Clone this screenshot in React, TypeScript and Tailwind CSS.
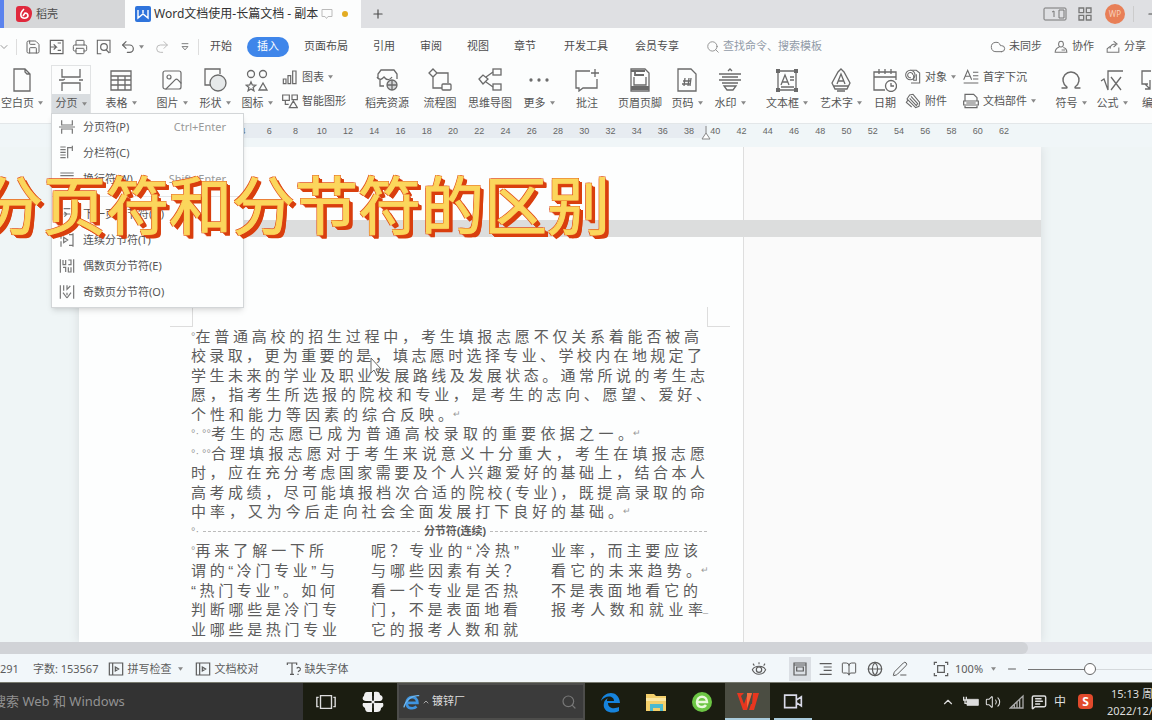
import type { ReactNode } from 'react'
import {
  BookOpen,
  ChevronDown,
  ChevronUp,
  Cloud,
  Globe,
  Image,
  MessageSquareText,
  Minus,
  Omega,
  PenLine,
  Plus,
  Printer,
  Redo2,
  Save,
  Search,
  Undo2,
  Volume2,
} from 'lucide-react'

type IconProps = { children: ReactNode; className?: string }

function Icon({ children, className = 'size-6' }: IconProps) {
  return (
    <svg
      viewBox="0 0 24 24"
      fill="none"
      stroke="currentColor"
      strokeWidth="1.3"
      className={`shrink-0 ${className}`}
      aria-hidden="true"
    >
      {children}
    </svg>
  )
}

function Caret() {
  return (
    <svg viewBox="0 0 6 4" className="h-1 w-[5px] shrink-0 fill-[#888]" aria-hidden="true">
      <path d="M0 0h6L3 4z" />
    </svg>
  )
}

const icons: Record<string, ReactNode> = {
  blank: <path d="M4 1h11l5 5v17H4zM15 1v3l2 2h3" />,
  break: <path d="M3 1v8h18V1M0 12h4l2-1M3 23v-8h18v8M20 12h4" />,
  table: (
    <>
      <path d="M2 3h20v19H2z" />
      <path d="M2 8h20M2 12h20M2 17h20M9 8v14M16 8v14" />
    </>
  ),
  shapes: (
    <>
      <path d="M8 17H2V1h15v5" />
      <circle cx="15" cy="15" r="8" fill="#e6e9ea" />
    </>
  ),
  iconset: (
    <>
      <circle cx="6" cy="6" r="3.500" />
      <circle cx="18" cy="6" r="3.500" />
      <path d="M6 14l1.300 3 3.400.3-2.600 2.200.8 3.300L6 21l-2.900 1.800.8-3.300-2.600-2.200 3.400-.3zM18 15l4 7h-8z" />
    </>
  ),
  chart: <path d="M2 15h4v7H2zM9 10h4v12H9zM16 3h5v19h-5z" strokeWidth="1.8" />,
  smart: <path d="M1 3h10v8H1zM5 11v6h5M11 22l6-10 6 10zM15 3h8v7h-8z" strokeWidth="1.8" />,
  store: (
    <>
      <path d="M9 18H5v-6M3 11V6l3-4h13l3 4v5M2 9c3 4 5 2 7 0 3 4 6 3 8 0" />
      <circle cx="17" cy="17" r="5" fill="#d5d7d8" />
      <path d="M12 17h10M17 12v10" />
    </>
  ),
  flow: (
    <>
      <path d="M5 1l4 4-4 4-4-4zM9 5h11v10M5 9v11h9" />
      <rect x="14" y="16" width="9" height="6" rx="1" />
    </>
  ),
  mind: (
    <>
      <path d="M1 11l4-4 5 4-5 5zM8 9l7-5M8 14l7 5" />
      <rect x="15" y="1" width="8" height="6" />
      <rect x="15" y="16" width="8" height="6" />
    </>
  ),
  more: (
    <>
      <circle cx="4" cy="12" r="1" fill="currentColor" />
      <circle cx="12" cy="12" r="1" fill="currentColor" />
      <circle cx="20" cy="12" r="1" fill="currentColor" />
    </>
  ),
  comment: <path d="M15 3H1v17h3v3l4-3h14v-9M20 1v8M16 5h8" />,
  header: (
    <>
      <path d="M3 1h14l4 4v18H3z" />
      <path d="M3 3h14M3 19h18M3 21h18M7 3v4h9" strokeWidth="1.8" />
      <path d="M6 9v8h12V9" />
    </>
  ),
  pageNo: (
    <>
      <path d="M3 1h13l5 5v17H3z" />
      <path d="M10 10l-1 8M14 10l-1 8M8 13h8M7 16h8M16 10l-1 8" />
    </>
  ),
  watermark: <path d="M1 6h22M1 12h22M4 9h16M4 15h16M6 18h12l-3 4H9zM10 3l2-2 2 2" />,
  textBox: (
    <>
      <path d="M3 3h18v19H3z" />
      <path d="M6 17l4-10 4 10M7 14h6M15 9h4M15 12h4M6 19h13" />
      <g fill="currentColor" stroke="none">
        <path d="M1 1h4v4H1zM19 1h4v4h-4zM1 20h4v4H1zM19 20h4v4h-4z" />
      </g>
    </>
  ),
  wordArt: (
    <path d="M12 1l3 3 6 11-3 6H6l-3-6L9 4zM8 16l4-10 4 10M9 13h6M4 18h16M8 23h8" />
  ),
  date: (
    <>
      <path d="M12 22H1V4h22v8M1 9h22M6 1v5M12 1v5M18 1v5" />
      <circle cx="18" cy="18" r="5.500" fill="#fff" />
      <path d="M18 15v3h3" />
    </>
  ),
  object: (
    <>
      <path d="M9 21h13V6l-5-4H8" strokeWidth="1.600" />
      <circle cx="8" cy="9" r="7" fill="#fff" strokeWidth="1.600" />
      <path d="M12 9a4 4 0 1 0-3 4M13 9v8h4V8" strokeWidth="1.600" />
    </>
  ),
  attach: <path d="M3 9l4-6 5-1 10 12-1 6-5 2L3 9zM7 8l10 11 2-3L9 5M4 11l-2 3 8 7" strokeWidth="1.600" />,
  dropCap: <path d="M1 16L7 2l6 14M3 11h8M15 5h8M15 10h8M15 15h8M1 21h22" strokeWidth="1.600" />,
  parts: (
    <>
      <path d="M3 12V2h13l5 5v5M3 19v3h18v-3" strokeWidth="1.800" />
      <path d="M1 12h22v6H1zM5 15h14" strokeWidth="1.800" />
    </>
  ),
  formula: <path d="M1 13l3-2 4 11V3h15M11 9l10 13M21 9L11 22" />,
  numbering: <path d="M10 3H1v13h6M14 8h10M4 16l5 5M9 12v9H4M14 4h10v16H14z" />,
}

type Tool = { label: string; icon: string; box: string; caret?: boolean }

const toolsLeft: Tool[] = [
  { label: '表格', icon: 'table', box: 'ml-2 w-11', caret: true },
  { label: '图片', icon: 'image', box: 'ml-[7px] w-11', caret: true },
  { label: '形状', icon: 'shapes', box: 'w-[42px]', caret: true },
  { label: '图标', icon: 'iconset', box: 'w-[42px]', caret: true },
]

const toolsMiddle: Tool[] = [
  { label: '稻壳资源', icon: 'store', box: 'ml-3 w-[52px]' },
  { label: '流程图', icon: 'flow', box: 'ml-0.5 w-[50px]' },
  { label: '思维导图', icon: 'mind', box: 'w-[50px]' },
  { label: '更多', icon: 'more', box: 'ml-0.5 w-11', caret: true },
  { label: '批注', icon: 'comment', box: 'ml-1 w-11' },
  { label: '页眉页脚', icon: 'header', box: 'ml-1.5 w-[50px]' },
  { label: '页码', icon: 'pageNo', box: 'w-11', caret: true },
  { label: '水印', icon: 'watermark', box: 'w-[42px]', caret: true },
  { label: '文本框', icon: 'textBox', box: 'ml-2.5 w-[52px]', caret: true },
  { label: '艺术字', icon: 'wordArt', box: 'ml-0.5 w-[52px]', caret: true },
  { label: '日期', icon: 'date', box: 'w-9' },
]

const toolsRight: Tool[] = [
  { label: '符号', icon: 'omega', box: 'ml-3 w-10', caret: true },
  { label: '公式', icon: 'formula', box: 'w-[42px]', caret: true },
  { label: '编号', icon: 'numbering', box: 'w-10' },
]

function ToolIcon({ name }: { name: string }) {
  if (name === 'image') {
    return <Image className="size-6 text-[#6a6a6a]" strokeWidth={1.2} />
  }
  if (name === 'omega') {
    return <Omega className="size-6 text-[#6a6a6a]" strokeWidth={1.4} />
  }
  return <Icon className="size-6 text-[#6a6a6a]">{icons[name]}</Icon>
}

function ToolButton({ label, icon, box, caret }: Tool) {
  return (
    <button className={`flex shrink-0 flex-col items-center gap-[3px] pt-[3px] ${box}`}>
      <ToolIcon name={icon} />
      <span className="flex items-center gap-1 whitespace-nowrap leading-4">
        {label}
        {caret && <Caret />}
      </span>
    </button>
  )
}

function SmallTool({ label, icon, caret }: { label: string; icon: string; caret?: boolean }) {
  return (
    <button className="flex h-6 items-center gap-1 whitespace-nowrap">
      <Icon className="size-4 text-[#6a6a6a]">{icons[icon]}</Icon>
      {label}
      {caret && <Caret />}
    </button>
  )
}

function TitleBar() {
  return (
    <div className="flex h-7 shrink-0 items-stretch overflow-hidden bg-[#dfe0e3]">
      <div className="w-1 shrink-0 bg-[#5b83ee]" />
      <button className="flex w-[121px] shrink-0 items-center gap-1 bg-[#d6d7d9] pl-3">
        <svg viewBox="0 0 16 16" className="size-4" aria-hidden="true">
          <path d="M3 0h6c4 0 7 3 7 7 0 5-3 9-7 9H3c-2 0-3-1-3-3V3c0-2 1-3 3-3z" fill="#e0293d" />
          <path d="M8 3c-2 2-4 4-3 7 1 3 6 3 7 0 0-2-1-3-3-3l-2 3" fill="none" stroke="#fff" strokeWidth="1.600" />
        </svg>
        稻壳
      </button>
      <div className="flex w-[236px] shrink-0 items-center gap-[3px] bg-[#fcfdfd] pl-2.5">
        <svg viewBox="0 0 16 16" className="size-4 shrink-0" aria-hidden="true">
          <rect width="16" height="16" rx="2" fill="#2f74dc" />
          <path d="M3 4v8l5-4 5 4V4M8 4v3" fill="none" stroke="#fff" strokeWidth="1.400" />
        </svg>
        <span className="whitespace-nowrap text-[12px] text-[#333]">Word文档使用-长篇文档 - 副本</span>
        <Icon className="size-3 text-[#bbb]">
          <path d="M2 3h20v14h-8l-3 4-3-4H2z" strokeWidth="2" />
        </Icon>
        <span className="ml-1.5 size-1.5 rounded-full bg-[#e3ac23]" />
      </div>
      <button className="ml-2.5 flex items-center" aria-label="新建">
        <Plus className="size-3.5" strokeWidth={2} />
      </button>
      <div className="ml-auto flex shrink-0 items-center">
        <svg viewBox="0 0 24 14" className="h-3.5 w-6" fill="none" stroke="#777" aria-hidden="true">
          <rect x="1" y="1" width="22" height="12" rx="1" />
          <path d="M9 5l2-1v6M16 3v8h5V3z" />
        </svg>
        <Icon className="ml-2.5 size-4 text-[#777]">
          <path d="M3 3h7v7H3zM14 3h7v7h-7zM3 14h7v7H3zM14 14h7v7h-7z" strokeWidth="2" />
        </Icon>
        <span className="ml-3 flex size-5 items-center justify-center rounded-full bg-[#e87f57] text-[8px] text-[#f7cdb8]">
          WP
        </span>
        <span className="ml-2 h-4 w-px bg-[#ccc]" />
        <button className="ml-3 w-1.5 overflow-hidden" aria-label="最小化">
          <Minus className="size-3.5" />
        </button>
      </div>
    </div>
  )
}

function MenuBar() {
  return (
    <div className="flex h-[37px] shrink-0 items-center overflow-hidden whitespace-nowrap">
      <div className="flex w-[210px] shrink-0 items-center text-[#666]">
        <ChevronDown className="-ml-0.5 size-3 text-[#999]" />
        <span className="ml-1.5 h-4 w-px bg-[#ddd]" />
        <Save className="ml-2 size-4" strokeWidth={1.5} />
        <Icon className="ml-2 size-4">
          <path d="M2 2h19v20H2zM2 12h9l-4-4M7 16l4-4M13 6h5M13 17h5" strokeWidth="1.800" />
        </Icon>
        <Printer className="ml-[7px] size-4" strokeWidth={1.5} />
        <Icon className="ml-2 size-4">
          <path d="M8 22H2V2h19v19" strokeWidth="1.600" />
          <circle cx="12" cy="12" r="5" strokeWidth="1.800" />
          <path d="M15 16l5 5" strokeWidth="1.800" />
        </Icon>
        <Undo2 className="ml-2 size-4" strokeWidth={1.8} />
        <span className="ml-[3px]">
          <Caret />
        </span>
        <Redo2 className="ml-2.5 size-4 text-[#bbb]" strokeWidth={1.5} />
        <Icon className="ml-2.5 size-2.5">
          <path d="M4 4h16M5 11h14l-7 8z" strokeWidth="2" />
        </Icon>
        <span className="ml-2 h-4 w-px bg-[#ddd]" />
      </div>
      <nav className="flex items-center gap-[25px]">
        <button>开始</button>
        <button className="-mx-2.5 h-5 w-[42px] rounded-full bg-[#3f86ea] text-white">插入</button>
        <button>页面布局</button>
        <button>引用</button>
        <button>审阅</button>
        <button>视图</button>
        <button>章节</button>
        <button className="ml-[3px]">开发工具</button>
        <button className="ml-0.5">会员专享</button>
      </nav>
      <label className="ml-[27px] flex items-center gap-[3px] text-[#888]">
        <Search className="size-3.5" strokeWidth={1.5} />
        <input
          className="w-32 bg-transparent outline-none placeholder:text-[#929ba8]"
          placeholder="查找命令、搜索模板"
          aria-label="查找命令"
        />
      </label>
      <div className="ml-auto flex shrink-0 items-center gap-3 pr-1.5 text-[#555]">
        <button className="flex items-center gap-[3px]">
          <Cloud className="size-4 text-[#777]" strokeWidth={1.5} />
          未同步
        </button>
        <button className="flex items-center gap-1">
          <Icon className="size-3.5 text-[#777]">
            <path d="M12 12c-6 0-5-10 0-10s6 10 0 10zM9 12c-5 2-7 4-7 9h20c0-5-2-7-6-8M13 17h6" strokeWidth="1.800" />
          </Icon>
          协作
        </button>
        <button className="flex items-center gap-1">
          <Icon className="size-3.5 text-[#777]">
            <path d="M7 11l-5 4v6h20v-8M7 15c0-6 4-8 10-8M13 2l6 5-6 5" strokeWidth="1.800" />
          </Icon>
          分享
        </button>
      </div>
    </div>
  )
}

type BreakItem = { label: string; keys?: string; path: string }

const breakItems: BreakItem[] = [
  { label: '分页符(P)', keys: 'Ctrl+Enter', path: 'M4 2v7h16V2M0 12h24M4 22v-7h16v7' },
  { label: '分栏符(C)', path: 'M2 3h8M2 7h8M2 11h8M2 15h8M2 19h8M13 3v17M13 4h6M20 1v8' },
  { label: '换行符(W)', keys: 'Shift+Enter', path: 'M2 3h20M2 7h20M2 12h12M20 11v6H8M12 13l-4 4 4 4' },
  { label: '下一页分节符(N)', path: 'M3 2v20M21 2v20M7 4h10M7 12h10M8 9l4 3-4 4' },
  { label: '连续分节符(T)', path: 'M3 2v8M3 14v8M21 2v20M7 8l6 4-6 4zM15 4h6M15 20h6' },
  { label: '偶数页分节符(E)', path: 'M2 2v20M22 2v20M6 3v7h4V3M14 3h4v7h-4M6 14h4v7M14 14v7h4v-7' },
  { label: '奇数页分节符(O)', path: 'M2 2v20M22 2v20M7 2v8M12 2v6l5-5M6 13l6 8M18 13l-6 8M12 13v4' },
]

function BreakMenu() {
  return (
    <div
      role="menu"
      className="absolute top-full -left-px z-10 flex w-[193px] flex-col border border-[#d3d6d8] bg-[#fdfefe] pb-0.5 shadow-md"
    >
      {breakItems.map((item, i) => (
        <button
          key={item.label}
          role="menuitem"
          className={`flex h-[26px] items-center whitespace-nowrap pr-[17px] pl-[7px] text-[#555] ${
            i === 3 ? 'mt-1 box-content border-t border-[#e4e6e8] pt-1' : ''
          }`}
        >
          <Icon className="mr-2 size-4 text-[#777]">
            <path d={item.path} strokeWidth="1.800" />
          </Icon>
          {item.label}
          {item.keys && <span className="ml-auto text-[#999]">{item.keys}</span>}
        </button>
      ))}
    </div>
  )
}

function Ribbon() {
  return (
    <div className="flex h-[59px] shrink-0 items-start border-b border-[#e3e7e9] text-[#555]">
      <ToolButton label="空白页" icon="blank" box="w-11" caret />
      <div className="relative ml-[7px] w-10 shrink-0 border border-[#e1e3e4]">
        <button className="flex w-full flex-col items-center gap-0.5 pt-0.5">
          <ToolIcon name="break" />
          <span className="flex h-[19px] w-full items-center justify-center gap-1 bg-[#d9dde0]">
            分页
            <Caret />
          </span>
        </button>
        <BreakMenu />
      </div>
      {toolsLeft.map((tool) => (
        <ToolButton key={tool.label} {...tool} />
      ))}
      <div className="ml-1 w-[67px] shrink-0">
        <SmallTool label="图表" icon="chart" caret />
        <SmallTool label="智能图形" icon="smart" />
      </div>
      {toolsMiddle.map((tool) => (
        <ToolButton key={tool.label} {...tool} />
      ))}
      <div className="ml-0.5 w-[54px] shrink-0">
        <SmallTool label="对象" icon="object" caret />
        <SmallTool label="附件" icon="attach" />
      </div>
      <div className="ml-1 w-[76px] shrink-0">
        <SmallTool label="首字下沉" icon="dropCap" />
        <SmallTool label="文档部件" icon="parts" caret />
      </div>
      {toolsRight.map((tool) => (
        <ToolButton key={tool.label} {...tool} />
      ))}
    </div>
  )
}

const rulerMarks = Array.from({ length: 30 }, (_, i) => 4 + i * 2)

function Ruler() {
  return (
    <div className="flex h-[23px] shrink-0 items-start bg-[#f0f6f8] font-['Liberation_Sans',sans-serif] text-[9px] text-[#666]">
      <div className="relative ml-[192px] flex h-3.5 w-[515px] shrink-0 bg-[#e7ecf1] pl-[38px]">
        <div className="flex w-[787px] shrink-0">
          {rulerMarks.map((n) => (
            <span key={n} className="flex-1 text-center leading-[14px]">
              {n}
            </span>
          ))}
        </div>
        <svg viewBox="0 0 10 14" className="absolute top-0.5 -right-1 h-3.5 w-2.5" aria-hidden="true">
          <path d="M5 0v7M5 7l4 6H1z" fill="#fff" stroke="#888" />
        </svg>
      </div>
    </div>
  )
}

type Line = { text: string; width: string; marks?: string; end?: string }

const body: Line[] = [
  { text: '在普通高校的招生过程中，考生填报志愿不仅关系着能否被高', width: 'w-[508px]', marks: '°' },
  { text: '校录取，更为重要的是，填志愿时选择专业、学校内在地规定了', width: 'w-[511px]' },
  { text: '学生未来的学业及职业发展路线及发展状态。通常所说的考生志', width: 'w-[514px]' },
  { text: '愿，指考生所选报的院校和专业，是考生的志向、愿望、爱好、', width: 'w-[520px]' },
  { text: '个性和能力等因素的综合反映。', width: 'w-[270px]', end: '↵' },
  { text: '考生的志愿已成为普通高校录取的重要依据之一。', width: 'w-[450px]', marks: '°· °°', end: '↵' },
  { text: '合理填报志愿对于考生来说意义十分重大，考生在填报志愿', width: 'w-[514px]', marks: '°· °°' },
  { text: '时，应在充分考虑国家需要及个人兴趣爱好的基础上，结合本人', width: 'w-[514px]' },
  { text: '高考成绩，尽可能填报档次合适的院校(专业)，既提高录取的命', width: 'w-[514px]' },
  { text: '中率，又为今后走向社会全面发展打下良好的基础。', width: 'w-[440px]', end: '↵' },
]

const columns: Line[][] = [
  [
    { text: '再来了解一下所', width: 'w-[133px]', marks: '°' },
    { text: '谓的“冷门专业”与', width: 'w-[144px]' },
    { text: '“热门专业”。如何', width: 'w-[144px]' },
    { text: '判断哪些是冷门专', width: 'w-[146px]' },
    { text: '业哪些是热门专业', width: 'w-[146px]' },
  ],
  [
    { text: '呢？专业的“冷热”', width: 'w-[148px]' },
    { text: '与哪些因素有关？', width: 'w-[148px]' },
    { text: '看一个专业是否热', width: 'w-[147px]' },
    { text: '门，不是表面地看', width: 'w-[147px]' },
    { text: '它的报考人数和就', width: 'w-[147px]' },
  ],
  [
    { text: '业率，而主要应该', width: 'w-[147px]' },
    { text: '看它的未来趋势。', width: 'w-[158px]', end: '↵' },
    { text: '不是表面地看它的', width: 'w-[147px]' },
    { text: '报考人数和就业率', width: 'w-[157px]', end: '_' },
    { text: '', width: 'w-[147px]' },
  ],
]

function TextLine({ text, width, marks, end }: Line) {
  return (
    <p className={`flex h-[19px] items-center whitespace-nowrap leading-[19px] ${width}`}>
      {marks && <span className="shrink-0 text-[11px] text-[#999]">{marks}</span>}
      <span className="block flex-1 [text-align-last:justify]">{text}</span>
      {end && <span className="shrink-0 text-[9px] text-[#999]">{end}</span>}
    </p>
  )
}

function Workspace() {
  return (
    <main className="relative flex min-h-0 flex-1 overflow-hidden bg-[#eff5f6] pl-[79px]">
      <div className="flex w-[962px] shrink-0 flex-col shadow-[0_0_10px_#d5dadd]">
        <div className="flex h-[73px] shrink-0">
          <div className="w-[665px] border-r border-[#dedede] bg-[#fdfefe]" />
          <div className="flex-1 bg-[#fafafa]" />
        </div>
        <div className="h-[17px] shrink-0 bg-[#dcdddd]" />
        <div className="flex flex-1">
          <article className="relative w-[665px] border-r border-[#dedede] bg-[#fdfefe] font-['Liberation_Sans','Noto_Sans_CJK_SC',sans-serif] text-[15px] text-[#5c5c5c]">
            <div className="mt-[70px] ml-[91px] flex w-[560px] justify-between">
              <span className="h-5 w-[23px] border-r border-b border-[#ddd]" />
              <span className="h-5 w-[23px] border-b border-l border-[#ddd]" />
            </div>
            <div className="ml-[112px] w-[522px]">
              <div className="flex h-[194px] flex-col justify-between">
                {body.map((line) => (
                  <TextLine key={line.text} {...line} />
                ))}
              </div>
              <div className="flex h-5 w-[516px] items-center gap-1 text-[11px]">
                <span className="text-[#999]">°·</span>
                <span className="flex-1 border-b border-dashed border-[#bbb]" />
                <span className="font-bold">分节符(连续)</span>
                <span className="flex-1 border-b border-dashed border-[#bbb]" />
              </div>
              <div className="flex">
                {columns.map((lines, i) => (
                  <div key={i} className="flex h-[98px] w-[180px] shrink-0 flex-col justify-between">
                    {lines.map((line) => (
                      <TextLine key={line.text} {...line} />
                    ))}
                  </div>
                ))}
              </div>
            </div>
            <svg viewBox="0 0 12 20" className="absolute top-[120px] left-[291px] h-5 w-3" aria-hidden="true">
              <path d="M1 1v15l3-3 3 6 2-1-3-6h5z" fill="#fff" stroke="#666" />
            </svg>
          </article>
          <div className="flex-1 bg-[#fafafa]" />
        </div>
      </div>
    </main>
  )
}

function StatusBar() {
  return (
    <div className="flex h-7 shrink-0 items-center overflow-hidden whitespace-nowrap bg-[#f2f7fa] pt-0.5 text-[#5c5c5c]">
      <span>291</span>
      <span className="ml-3.5">字数: 153567</span>
      <button className="ml-2.5 flex items-center gap-[3px]">
        <Icon className="size-4">
          <path d="M2 3h20v18H2zM7 3v18M11 9l5 3-5 3z" strokeWidth="1.800" />
        </Icon>
        拼写检查
        <span className="ml-1">
          <Caret />
        </span>
      </button>
      <button className="ml-3 flex items-center gap-[3px]">
        <Icon className="size-4">
          <path d="M2 3h20v18H2zM7 3v18M11 9l5 3-5 3z" strokeWidth="1.800" />
        </Icon>
        文档校对
      </button>
      <button className="ml-7 flex items-center gap-0.5">
        <Icon className="size-4">
          <path d="M2 6V3h14v3M9 3v17M6 20h6M16 11c3-3 7 0 5 3l-3 2M18 19v2" strokeWidth="1.800" />
        </Icon>
        缺失字体
      </button>
      <div className="ml-auto flex shrink-0 items-center">
        <Icon className="size-4">
          <path d="M2 13c4-7 16-7 20 0-4 9-16 9-20 0zM12 5V2M5 7L3 4M19 7l2-3" strokeWidth="1.600" />
          <circle cx="12" cy="13" r="4" strokeWidth="1.800" />
        </Icon>
        <button className="ml-[22px] flex h-6 w-[22px] items-center justify-center bg-[#dbdfe4]" aria-label="页面视图">
          <Icon className="size-4">
            <path d="M3 3h18v18H3zM7 9h10v6H7zM3 6h18" strokeWidth="1.800" />
          </Icon>
        </button>
        <Icon className="ml-1.5 size-4">
          <path d="M4 4h18M10 9h12M10 14h12M4 20h18" strokeWidth="1.800" />
        </Icon>
        <BookOpen className="ml-2 size-4" strokeWidth={1.5} />
        <Globe className="ml-2.5 size-4" strokeWidth={1.8} />
        <PenLine className="ml-[9px] size-4" strokeWidth={1.5} />
        <Icon className="ml-[25px] size-4">
          <path d="M7 7h10v10H7zM2 6V2h4M18 2h4v4M22 18v4h-4M6 22H2v-4" strokeWidth="1.800" />
        </Icon>
        <span className="ml-1.5 w-8">100%</span>
        <span className="ml-1">
          <Caret />
        </span>
        <button className="ml-2.5" aria-label="缩小">
          <Minus className="size-3" />
        </button>
        <input
          type="range"
          defaultValue={50}
          aria-label="显示比例"
          className="ml-2.5 h-px w-[124px] appearance-none bg-[linear-gradient(to_right,#777_50%,#d5d9dc_50%)] [&::-webkit-slider-thumb]:size-3 [&::-webkit-slider-thumb]:appearance-none [&::-webkit-slider-thumb]:rounded-full [&::-webkit-slider-thumb]:border [&::-webkit-slider-thumb]:border-[#666] [&::-webkit-slider-thumb]:bg-white"
        />
      </div>
    </div>
  )
}

function Taskbar() {
  return (
    <div className="flex h-[38px] shrink-0 items-stretch overflow-hidden border-t border-[#77796e] bg-[#1b1d11] text-[#ddd]">
      <input
        className="-ml-[7px] w-[310px] shrink-0 bg-[#333] text-[13px] outline-none placeholder:text-[#929292]"
        placeholder="搜索 Web 和 Windows"
        aria-label="搜索"
      />
      <button className="ml-3 flex items-center" aria-label="任务视图">
        <Icon className="size-[22px]">
          <path d="M6 5h12v14H6zM4 7H2v10h2M20 7h2v10h-2" strokeWidth="1.500" />
        </Icon>
      </button>
      <button className="ml-[25px] flex items-center" aria-label="浏览器">
        <svg viewBox="0 0 22 22" className="size-[22px]" aria-hidden="true">
          <g fill="#f0f0f0">
            <path d="M5 1h5v9H4c-4 0-4-4-2-5 0-2 1-4 3-4z" />
            <path d="M12 1c4-1 6 0 6 3 4 1 3 6 0 6h-6z" />
            <path d="M1 12h9v9H6c-2 0-3-2-3-4-2-1-3-3-2-5z" />
            <path d="M12 12h9c1 3 0 4-2 5 0 3-2 4-4 4h-3z" />
            <circle cx="11" cy="11" r="2" />
          </g>
          <path d="M10 11H6M11 10V5M12 11h5M11 12v5" stroke="#333" strokeWidth="1.200" />
        </svg>
      </button>
      <div className="ml-[13px] flex w-[188px] shrink-0 items-center border-2 border-[#4d4d4b] bg-[#3b3b3b] pr-1.5 pl-1">
        <svg viewBox="0 0 20 20" className="size-[18px]" aria-hidden="true">
          <path d="M4 11h12c0-9-12-8-12 0 0 7 8 7 11 4" fill="none" stroke="#3f94e0" strokeWidth="3" />
          <path d="M1 16C3 8 10 2 18 3" fill="none" stroke="#6cb5ee" strokeWidth="1.500" />
        </svg>
        <ChevronUp className="ml-px size-2" />
        <span className="ml-0.5">镀锌厂</span>
        <Search className="ml-auto size-4 text-[#777]" strokeWidth={1.8} />
      </div>
      <button className="ml-3.5 flex items-center" aria-label="Edge">
        <svg viewBox="0 0 24 24" className="size-6" aria-hidden="true">
          <path
            d="M2 11C4 1 20-1 21 13H9c0 6 7 6 11 4v4C12 25 3 21 5 13c0-2 2-4 4-5-1 1-1 2-1 3h7c0-6-9-6-13 0z"
            fill="#1683dc"
          />
        </svg>
      </button>
      <button className="ml-[21px] flex items-center" aria-label="文件资源管理器">
        <svg viewBox="0 0 24 24" className="size-6" aria-hidden="true">
          <path d="M2 4h8l2 2h10v15H2z" fill="#f3cf6b" />
          <path d="M2 8h20v3H2z" fill="#fbe6a2" />
          <path d="M6 21v-7h13v7h-3v-3H9v3z" fill="#4bb9cf" />
        </svg>
      </button>
      <button className="ml-[22px] flex items-center" aria-label="360浏览器">
        <svg viewBox="0 0 24 24" className="size-6" aria-hidden="true">
          <circle cx="12" cy="12" r="10" fill="#6cc644" />
          <path d="M7 12h10c0-7-10-7-10 0 0 6 7 6 9 3" fill="none" stroke="#eaf8dc" strokeWidth="2.500" />
        </svg>
      </button>
      <button
        className="ml-[11px] flex w-[45px] items-center justify-center border-b-2 border-[#a9cbdc] bg-[#4b4d42]"
        aria-label="WPS"
      >
        <svg viewBox="0 0 24 20" className="h-5 w-6" aria-hidden="true">
          <path d="M1 2h7l-3 3 3 8 4-11h4l-5 17H7zM17 2h6l-5 17h-5l2-6h1z" fill="#e8361f" />
          <path d="M11 2h5l-5 15z" fill="#f36b3e" />
        </svg>
      </button>
      <button className="ml-1 flex w-[38px] items-center justify-center border-b-2 border-[#a9cbdc]" aria-label="录屏">
        <Icon className="size-5 text-[#d9dae8]">
          <path d="M2 5h14v15H2zM16 11l6-4v11l-6-4" strokeWidth="2" />
        </Icon>
      </button>
      <div className="ml-auto flex shrink-0 items-center">
        <ChevronUp className="size-3.5" />
        <Icon className="ml-2 size-4">
          <path d="M6 8h17v9H6z" fill="currentColor" />
          <path d="M1 4v5h4V4M3 9v5h4" strokeWidth="2" />
        </Icon>
        <Volume2 className="ml-1.5 size-4" strokeWidth={1.6} />
        <Icon className="ml-2 size-4 text-[#aaa]">
          <path d="M2 21L21 3v18zM8 15v6M12 11v10M16 8v13" strokeWidth="2" />
        </Icon>
        <MessageSquareText className="ml-1.5 size-4" strokeWidth={2.2} />
        <span className="ml-[7px] text-[12px]">中</span>
        <span className="ml-3 flex size-[15px] items-center justify-center rounded-sm bg-[#e14a2c] text-[12px] font-bold text-white">
          S
        </span>
        <div className="ml-3.5 w-[45px] overflow-hidden whitespace-nowrap text-[11px] leading-[17px]">
          <p className="pl-1">15:13 周</p>
          <p>2022/12/</p>
        </div>
      </div>
    </div>
  )
}

export default function App() {
  return (
    <div className="relative flex h-screen flex-col overflow-hidden bg-[#fcfdfd] font-['Noto_Sans','Noto_Sans_CJK_SC',sans-serif] text-[11px] text-[#4c4c4c]">
      <TitleBar />
      <MenuBar />
      <Ribbon />
      <Ruler />
      <Workspace />
      <div className="h-3 shrink-0 bg-[#e2e4e9] pr-[124px]">
        <div className="h-full rounded-r-full bg-[#d1d3d7]" />
      </div>
      <StatusBar />
      <Taskbar />
      {/* Video caption */}
      <h1 className="absolute top-[156px] -left-5 z-20 whitespace-nowrap font-['Noto_Sans_CJK_SC',sans-serif] text-[63px] leading-[92px] font-normal text-[#fbd65c] [-webkit-text-stroke:1px_#fbd65c] [text-shadow:-1px_-1px_0_#e2561f,1px_-1px_0_#e2561f,-1px_1px_0_#e2561f,1px_1px_0_#d93f0e,2px_2px_0_#d93f0e,3px_3px_0_#d93f0e,4px_3px_0_#d93f0e,4px_4px_0_#d93f0e]">
        分页符和分节符的区别
      </h1>
    </div>
  )
}
